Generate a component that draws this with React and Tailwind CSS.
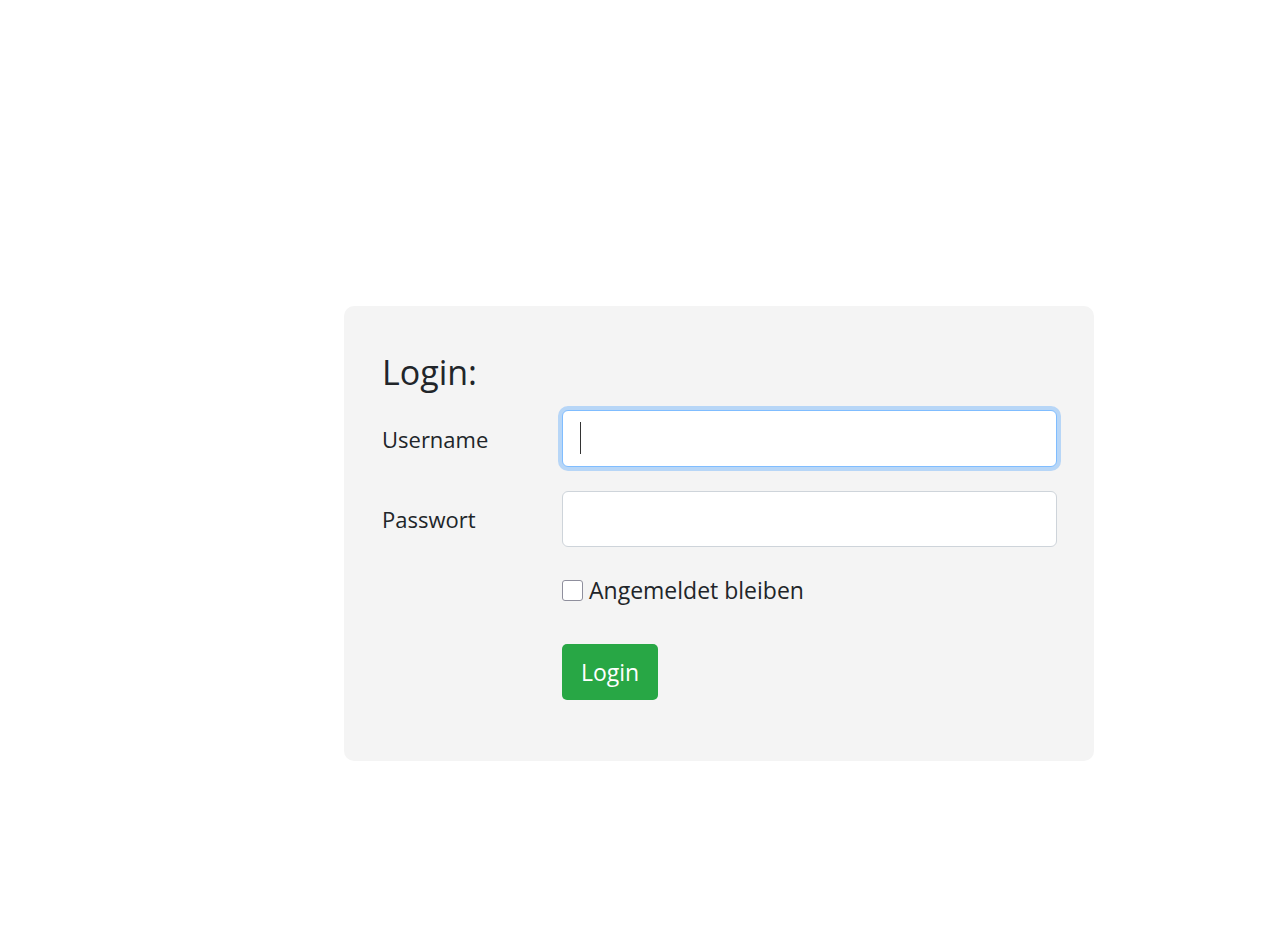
import React from "react";

const font = { fontFamily: '"Open Sans", "Noto Sans", sans-serif' };

const App = () => {
  return (
    <div className="min-h-[931px] bg-white pl-[344px] pt-[306px] text-[#212529]" style={font}>
      <div className="w-[750px] rounded-[10px] bg-[#f4f4f4] pl-[38px] pr-[37px] pt-[46px] pb-[61px]">
        <h3 className="mb-[17px] text-[34px] leading-[41px] font-normal">Login:</h3>

        <div className="mb-6 flex items-center">
          <label className="w-[180px] shrink-0 text-[22px] leading-[30px]">Username</label>
          <div className="relative flex-1">
            <input
              type="text"
              className="h-[57px] w-full rounded-[6px] border border-[#80bdff] bg-white px-[17px] text-[22px] outline-none shadow-[0_0_0_4px_rgba(0,123,255,0.25)]"
            />
            {/* text caret of the focused field */}
            <span className="pointer-events-none absolute left-[18px] top-[12px] h-[32px] w-px bg-[#333]" />
          </div>
        </div>

        <div className="flex items-center">
          <label className="w-[180px] shrink-0 text-[22px] leading-[30px]">Passwort</label>
          <input
            type="password"
            className="h-[56px] flex-1 rounded-[6px] border border-[#ced4da] bg-white px-[17px] text-[22px] outline-none"
          />
        </div>

        <div className="ml-[180px] mt-[28px] flex items-center gap-[6px]">
          <input
            type="checkbox"
            className="h-[21px] w-[21px] appearance-none rounded-[3px] border border-[#8f8f9d] bg-white"
          />
          <span className="text-[23px] leading-[31px]">Angemeldet bleiben</span>
        </div>

        <div className="ml-[180px] mt-[38px]">
          <button className="h-[56px] w-[96px] rounded-[5px] bg-[#28a745] text-[23px] text-white">
            Login
          </button>
        </div>
      </div>
    </div>
  );
};

export default App;
